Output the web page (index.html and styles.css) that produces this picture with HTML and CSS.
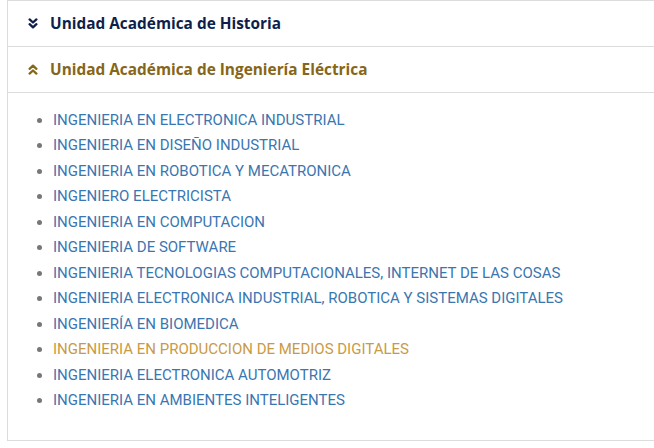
FILE: index.html
```html
<!DOCTYPE html>
<html lang="es">
<head>
<meta charset="utf-8">
<link rel="stylesheet" href="styles.css">
</head>
<body>
<div class="accordion">
  <div class="panel">
    <div class="panel-heading">
      <svg class="chev" viewBox="0 0 10 11" width="10" height="11"><path d="M1.6 1.4 L5 4.5 L8.4 1.4 M1.6 6.2 L5 9.3 L8.4 6.2" fill="none" stroke="currentColor" stroke-width="2.3" stroke-linecap="round" stroke-linejoin="round"/></svg>
      <span class="title">Unidad Académica de Historia</span>
    </div>
  </div>
  <div class="panel open">
    <div class="panel-heading">
      <svg class="chev" viewBox="0 0 10 11" width="10" height="11"><path d="M1.6 4.8 L5 1.7 L8.4 4.8 M1.6 9.6 L5 6.5 L8.4 9.6" fill="none" stroke="currentColor" stroke-width="2.3" stroke-linecap="round" stroke-linejoin="round"/></svg>
      <span class="title">Unidad Académica de Ingeniería Eléctrica</span>
    </div>
    <div class="panel-body">
      <ul class="careers">
        <li><a>INGENIERIA EN ELECTRONICA INDUSTRIAL</a></li>
        <li><a>INGENIERIA EN DISEÑO INDUSTRIAL</a></li>
        <li><a>INGENIERIA EN ROBOTICA Y MECATRONICA</a></li>
        <li><a>INGENIERO ELECTRICISTA</a></li>
        <li><a>INGENIERIA EN COMPUTACION</a></li>
        <li><a>INGENIERIA DE SOFTWARE</a></li>
        <li><a>INGENIERIA TECNOLOGIAS COMPUTACIONALES, INTERNET DE LAS COSAS</a></li>
        <li><a>INGENIERIA ELECTRONICA INDUSTRIAL, ROBOTICA Y SISTEMAS DIGITALES</a></li>
        <li><a>INGENIERÍA EN BIOMEDICA</a></li>
        <li><a class="active">INGENIERIA EN PRODUCCION DE MEDIOS DIGITALES</a></li>
        <li><a>INGENIERIA ELECTRONICA AUTOMOTRIZ</a></li>
        <li><a>INGENIERIA EN AMBIENTES INTELIGENTES</a></li>
      </ul>
    </div>
  </div>
  <div class="panel"></div>
</div>
</body>
</html>
```
FILE: styles.css
```css
html, body {
  margin: 0;
  padding: 0;
  background: #fff;
  overflow: hidden;
}
.accordion {
  margin-left: 7px;
  border-left: 1px solid #dcdcdc;
}
.panel {
  border-top: 1px solid #dcdcdc;
}
.panel-heading {
  height: 44px;
  padding-bottom: 1px;
  display: flex;
  align-items: center;
  padding-left: 20px;
  color: #0f1f4b;
  font-family: "Open Sans", sans-serif;
  font-weight: 700;
  font-size: 15.4px;
}
.open .panel-heading {
  color: #866619;
  border-bottom: 1px solid #dcdcdc;
}
.chev {
  margin-right: 12px;
  flex: none;
}
.panel-body {
  padding: 15px 0 27px 0;
}
.careers {
  margin: 0;
  padding-left: 45px;
  font-family: Roboto, sans-serif;
  font-size: 15px;
  color: #777;
}
.careers li {
  line-height: 25.45px;
}
.careers a {
  color: #3a76b0;
}
.careers a.active {
  color: #c99a45;
}
```
